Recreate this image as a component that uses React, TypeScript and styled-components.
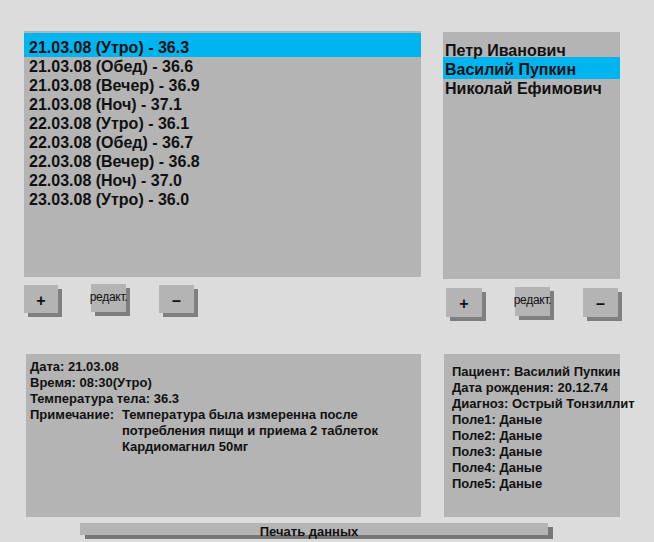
import React from "react";
import styled, { createGlobalStyle } from "styled-components";

const Global = createGlobalStyle`
  html, body { margin: 0; padding: 0; background: #dcdcdc; }
  body { font-family: "Liberation Sans", Arial, sans-serif; color: #111; }
`;

const Page = styled.div`
  width: 654px;
  height: 542px;
  overflow: hidden;
  background: #dcdcdc;
  display: flex;
  flex-direction: column;
`;

const Columns = styled.div`
  display: flex;
  padding-top: 31px;
`;

const Column = styled.div<{ $left: number; $width: number; $top?: number }>`
  margin-left: ${(p) => p.$left}px;
  margin-top: ${(p) => p.$top ?? 0}px;
  width: ${(p) => p.$width}px;
  display: flex;
  flex-direction: column;
`;

const List = styled.div<{ $height: number; $padTop: number }>`
  height: ${(p) => p.$height}px;
  background: #b4b4b4;
  padding-top: ${(p) => p.$padTop}px;
  box-sizing: border-box;
  overflow: hidden;
`;

const LeftList = styled(List)`
  border-top: 2px solid #a9b6bd;
`;

const Row = styled.div<{ $selected?: boolean; $extraTop?: number; $padLeft: number }>`
  font-size: 16px;
  font-weight: bold;
  line-height: 19px;
  white-space: nowrap;
  padding-left: ${(p) => p.$padLeft}px;
  background: ${(p) => (p.$selected ? "#00b4ef" : "transparent")};
  padding-top: ${(p) => p.$extraTop ?? 0}px;
  margin-top: ${(p) => -(p.$extraTop ?? 0)}px;
`;

const FirstRow = styled(Row)`
  margin-top: 0;
`;

const ButtonRow = styled.div<{ $top: number; $shift: number }>`
  display: flex;
  gap: 33px;
  margin-top: ${(p) => p.$top}px;
  margin-left: ${(p) => p.$shift}px;
  height: 32px;
`;

const SquareButton = styled.div<{ $w: number; $h: number }>`
  width: ${(p) => p.$w}px;
  height: ${(p) => p.$h}px;
  background: #b4b4b4;
  box-shadow: 4px 4px 0 #7f7f7f;
  display: flex;
  align-items: center;
  justify-content: center;
  font-size: 16px;
  font-weight: bold;
  padding-top: 3px;
  box-sizing: border-box;
`;

const EditButton = styled(SquareButton)`
  align-items: flex-start;
  padding-top: 6px;
  font-size: 12px;
  font-weight: normal;
  letter-spacing: -0.3px;
  white-space: nowrap;
  overflow: visible;
  margin-top: -1px;
`;

const Details = styled.div<{ $shift: number; $padTop: number; $padLeft: number; $width: number }>`
  margin-left: ${(p) => p.$shift}px;
  width: ${(p) => p.$width}px;
  height: 163px;
  background: #b4b4b4;
  box-sizing: border-box;
  padding-top: ${(p) => p.$padTop}px;
  padding-left: ${(p) => p.$padLeft}px;
  font-size: 13px;
  font-weight: bold;
  line-height: 16px;
  white-space: nowrap;
`;

const DetailsGap = styled.div<{ $h: number }>`
  height: ${(p) => p.$h}px;
`;

const Line = styled.div``;

const Note = styled.div`
  display: flex;
  gap: 8px;
`;

const NoteBody = styled.div`
  display: flex;
  flex-direction: column;
`;

const PrintButton = styled.div`
  margin-left: 80px;
  margin-top: 6px;
  width: 468px;
  height: 12px;
  background: #b4b4b4;
  box-shadow: 5px 4px 0 #777777;
  font-size: 13px;
  font-weight: bold;
  line-height: 14px;
  text-align: center;
  padding-top: 2px;
  box-sizing: border-box;
  white-space: nowrap;
  overflow: visible;
  text-indent: -10px;
`;

const measurements = [
  "21.03.08 (Утро) - 36.3",
  "21.03.08 (Обед) - 36.6",
  "21.03.08 (Вечер) - 36.9",
  "21.03.08 (Ноч) - 37.1",
  "22.03.08 (Утро) - 36.1",
  "22.03.08 (Обед) - 36.7",
  "22.03.08 (Вечер) - 36.8",
  "22.03.08 (Ноч) - 37.0",
  "23.03.08 (Утро) - 36.0",
];

const patients = ["Петр Иванович", "Василий Пупкин", "Николай Ефимович"];

const patientInfo = [
  "Пациент: Василий Пупкин",
  "Дата рождения: 20.12.74",
  "Диагноз: Острый Тонзиллит",
  "Поле1: Даные",
  "Поле2: Даные",
  "Поле3: Даные",
  "Поле4: Даные",
  "Поле5: Даные",
];

function Buttons({ top, shift, plusW, plusH }: { top: number; shift: number; plusW: number; plusH: number }) {
  return (
    <ButtonRow $top={top} $shift={shift}>
      <SquareButton $w={plusW} $h={plusH}>+</SquareButton>
      <EditButton $w={35} $h={plusH}>редакт.</EditButton>
      <SquareButton $w={35} $h={plusH}>–</SquareButton>
    </ButtonRow>
  );
}

export default function App() {
  return (
    <Page>
      <Global />
      <Columns>
        <Column $left={24} $width={397}>
          <LeftList $height={246} $padTop={0}>
            {measurements.map((m, i) =>
              i === 0 ? (
                <FirstRow key={m} $selected $extraTop={5} $padLeft={5}>
                  {m}
                </FirstRow>
              ) : (
                <Row key={m} $padLeft={5}>
                  {m}
                </Row>
              )
            )}
          </LeftList>
          <Buttons top={8} shift={0} plusW={34} plusH={28} />
          <DetailsGap $h={37} />
          <Details $shift={2} $width={395} $padTop={5} $padLeft={4}>
            <Line>Дата: 21.03.08</Line>
            <Line>Время: 08:30(Утро)</Line>
            <Line>Температура тела: 36.3</Line>
            <Note>
              <span>Примечание:</span>
              <NoteBody>
                <span>Температура была измеренна после</span>
                <span>потребления пищи и приема 2 таблеток</span>
                <span>Кардиомагнил 50мг</span>
              </NoteBody>
            </Note>
          </Details>
        </Column>
        <Column $left={22} $width={177} $top={1}>
          <List $height={247} $padTop={9}>
            {patients.map((p, i) => (
              <Row key={p} $selected={i === 1} $extraTop={i === 1 ? 3 : 0} $padLeft={2}>
                {p}
              </Row>
            ))}
          </List>
          <Buttons top={9} shift={3} plusW={36} plusH={29} />
          <DetailsGap $h={34} />
          <Details $shift={1} $width={176} $padTop={10} $padLeft={8}>
            {patientInfo.map((t) => (
              <Line key={t}>{t}</Line>
            ))}
          </Details>
        </Column>
      </Columns>
      <PrintButton>Печать данных</PrintButton>
    </Page>
  );
}
